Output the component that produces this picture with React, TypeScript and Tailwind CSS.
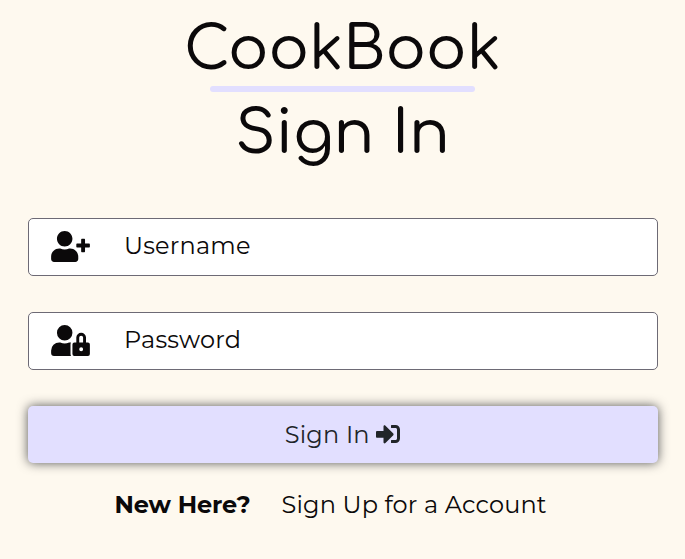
import type { ReactNode } from "react";
import { FaUserPlus, FaUserLock, FaSignInAlt } from "react-icons/fa";

function Field({ label, type, icon }: { label: string; type: string; icon: ReactNode }) {
  return (
    <label className="flex h-[58px] items-center rounded-[5px] border border-[#6d6a75] bg-white pl-[22px]">
      {icon}
      <input
        type={type}
        placeholder={label}
        className="mb-[3px] ml-[34px] min-w-0 flex-1 bg-transparent text-[24px] tracking-[0.2px] text-[#0b090a] outline-none placeholder:text-[#0b090a]"
      />
    </label>
  );
}

export default function App() {
  return (
    <main className="h-[559px] overflow-hidden bg-[#fef9ef] pr-[27px] pl-7 font-['Montserrat','Inter',sans-serif] text-[#0b090a]">
      <header className="flex h-[218px] flex-col items-center pt-[4px] pr-px font-['Comfortaa','Quicksand','Lato',sans-serif] text-[60px] font-medium">
        <h1 className="h-[82px] leading-[92px]">CookBook</h1>
        <div className="h-[6px] w-[265px] shrink-0 rounded-full bg-[#e2dfff]" />
        <h2 className="leading-[84px]">Sign In</h2>
      </header>
      <form className="flex flex-col gap-9">
        <Field label="Username" type="text" icon={<FaUserPlus className="mb-px h-[31px] w-[39px]" />} />
        <Field label="Password" type="password" icon={<FaUserLock className="mb-px h-[31px] w-[39px]" />} />
        <button type="button" className="flex h-[57px] items-center justify-center gap-[6px] rounded-[5px] bg-[#e2dfff] pr-[1.5px] text-[24px] text-[#212529] shadow-[0_0_11px_#555]">
          <span className="tracking-[0.2px]">Sign In</span>
          <FaSignInAlt className="-mt-px" />
        </button>
      </form>
      <p className="mt-[24px] flex pl-[86.5px] text-[24px]">
        <strong className="w-[167px] tracking-[-0.1px]">New Here?</strong>
        <span className="tracking-[0.16px]">Sign Up for a Account</span>
      </p>
    </main>
  );
}
